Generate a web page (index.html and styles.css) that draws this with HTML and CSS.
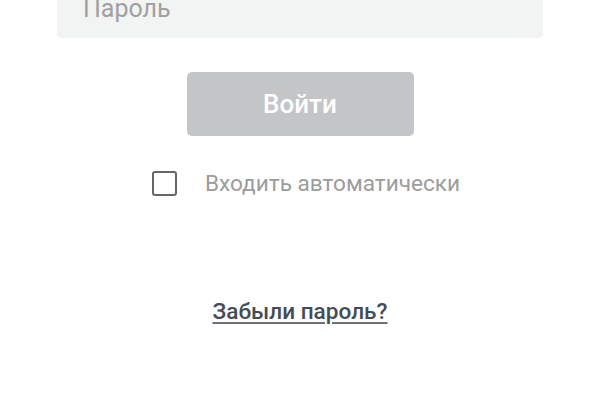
FILE: index.html
```html
<!DOCTYPE html>
<html lang="ru">
<head>
    <meta charset="UTF-8">
    <meta name="viewport" content="width=device-width, initial-scale=1.0">
    <title>Вход</title>
    <link rel="stylesheet" href="styles.css">
</head>
<body>
    <div class="login">
        <!-- Password field -->
        <input class="field" type="password" placeholder="Пароль">

        <button class="btn-login" disabled>Войти</button>

        <label class="remember">
            <span class="box"></span>
            <span>Входить автоматически</span>
        </label>

        <a href="#" class="forgot">Забыли пароль?</a>
    </div>
</body>
</html>
```

FILE: styles.css
```css
body {
    font-family: Roboto, 'Noto Sans', sans-serif;
    background-color: #fff;
    margin: 0;
    padding: 0;
}

.login {
    display: flex;
    flex-direction: column;
    align-items: center;
    margin-top: -26px;
}

.field {
    box-sizing: border-box;
    width: 486px;
    height: 64px;
    border: none;
    border-radius: 4px;
    background-color: #f2f3f3;
    padding: 5px 26px 0;
    font-family: inherit;
    font-size: 25px;
    color: #333;
    outline: none;
}

.field::placeholder {
    color: #a0a0a0;
}

.btn-login {
    width: 227px;
    height: 64px;
    margin-top: 34px;
    border: none;
    border-radius: 5px;
    background-color: #c4c5c7;
    color: #fff;
    font-family: inherit;
    font-size: 26px;
    font-weight: 500;
    cursor: default;
}

.remember {
    display: flex;
    align-items: center;
    gap: 28px;
    margin-top: 34px;
    margin-left: 12px;
    font-size: 22.6px;
    color: #9c9c9c;
}

.remember .box {
    box-sizing: border-box;
    width: 25px;
    height: 25px;
    border: 2px solid #666;
    border-radius: 3px;
}

.forgot {
    margin-top: 101px;
    font-size: 22.6px;
    font-weight: 500;
    color: #454c55;
    text-decoration: underline;
    text-decoration-color: #6b7078;
    text-decoration-thickness: 2px;
    text-underline-offset: 3px;
}
```
